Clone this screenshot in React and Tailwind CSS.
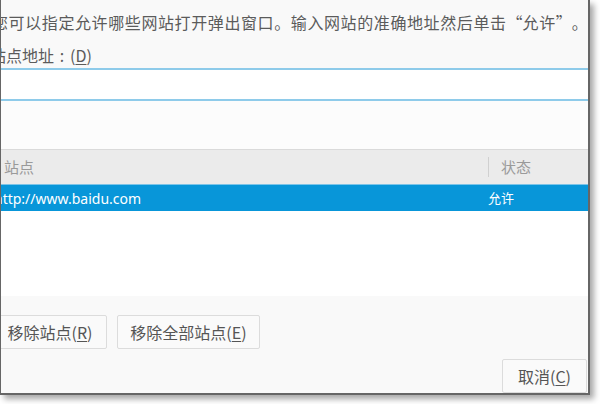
const cjk = { fontFamily: '"Noto Sans CJK SC", "Noto Sans", sans-serif' };
const latin = { fontFamily: '"Noto Sans", "Noto Sans CJK SC", sans-serif' };

const Btn = ({ children, className }) => (
  <button
    className={
      "h-[34px] border border-[#dcdcdc] rounded-[2px] bg-[#fafafa] text-[16px] text-[#555] whitespace-nowrap " +
      className
    }
    style={cjk}
  >
    {children}
  </button>
);

export default function App() {
  return (
    <div className="w-[600px] h-[404px] bg-white overflow-hidden" lang="zh-CN">
      <div className="w-[590px] h-[395px] bg-[#f9f9f9] border-l border-r-2 border-b-2 border-[#666] shadow-[4px_4px_6px_rgba(0,0,0,0.35)] overflow-hidden flex flex-col">
        <p
          className="-ml-[9px] mt-[12px] h-[20px] text-[16px] leading-[20px] tracking-[0.6px] text-[#5b5b5b] whitespace-nowrap"
          style={cjk}
        >
          您可以指定允许哪些网站打开弹出窗口。输入网站的准确地址然后单击
          <span className="inline-block w-[16px] text-right">“</span>允许
          <span className="inline-block w-[16px] text-left">”</span>。
        </p>
        <p
          className="-ml-[11px] mt-[13px] h-[20px] text-[16px] leading-[20px] text-[#5b5b5b] whitespace-nowrap"
          style={cjk}
        >
          站点地址<span className="inline-block w-[16px] text-center">:</span>(<span className="underline underline-offset-2">D</span>)
        </p>
        <div className="mt-[3px] h-[35px] border-y-2 border-[#8ecbea] bg-white" />
        <div className="h-[51px] bg-[#fcfcfc]" />
        <div className="h-[156px] bg-white border-t border-[#dadada]">
          <div className="h-[34px] bg-[#ebebeb] flex items-center text-[15px] text-[#9a9a9a]" style={cjk}>
            <span className="w-[487px] pl-[3px]">站点</span>
            <span className="w-px h-[20px] bg-[#d0d0d0]" />
            <span className="pl-[12px]">状态</span>
          </div>
          <div className="h-[27px] bg-[#0896d9] border-t border-[#7cc4e8] flex items-center text-white">
            <span className="w-[490px] -ml-[7px] text-[14px] whitespace-nowrap" style={latin}>
              http://www.baidu.com
            </span>
            <span className="pl-[4px] text-[13px]" style={cjk}>允许</span>
          </div>
        </div>
        <div className="mt-[19px] flex gap-[10px] -ml-[8px]">
          <Btn className="w-[114px]">
            移除站点(<span className="underline underline-offset-2">R</span>)
          </Btn>
          <Btn className="w-[143px]">
            移除全部站点(<span className="underline underline-offset-2">E</span>)
          </Btn>
        </div>
        <div className="mt-[10px] flex justify-end pr-[1px]">
          <Btn className="w-[85px]">
            取消(<span className="underline underline-offset-2">C</span>)
          </Btn>
        </div>
      </div>
    </div>
  );
}
